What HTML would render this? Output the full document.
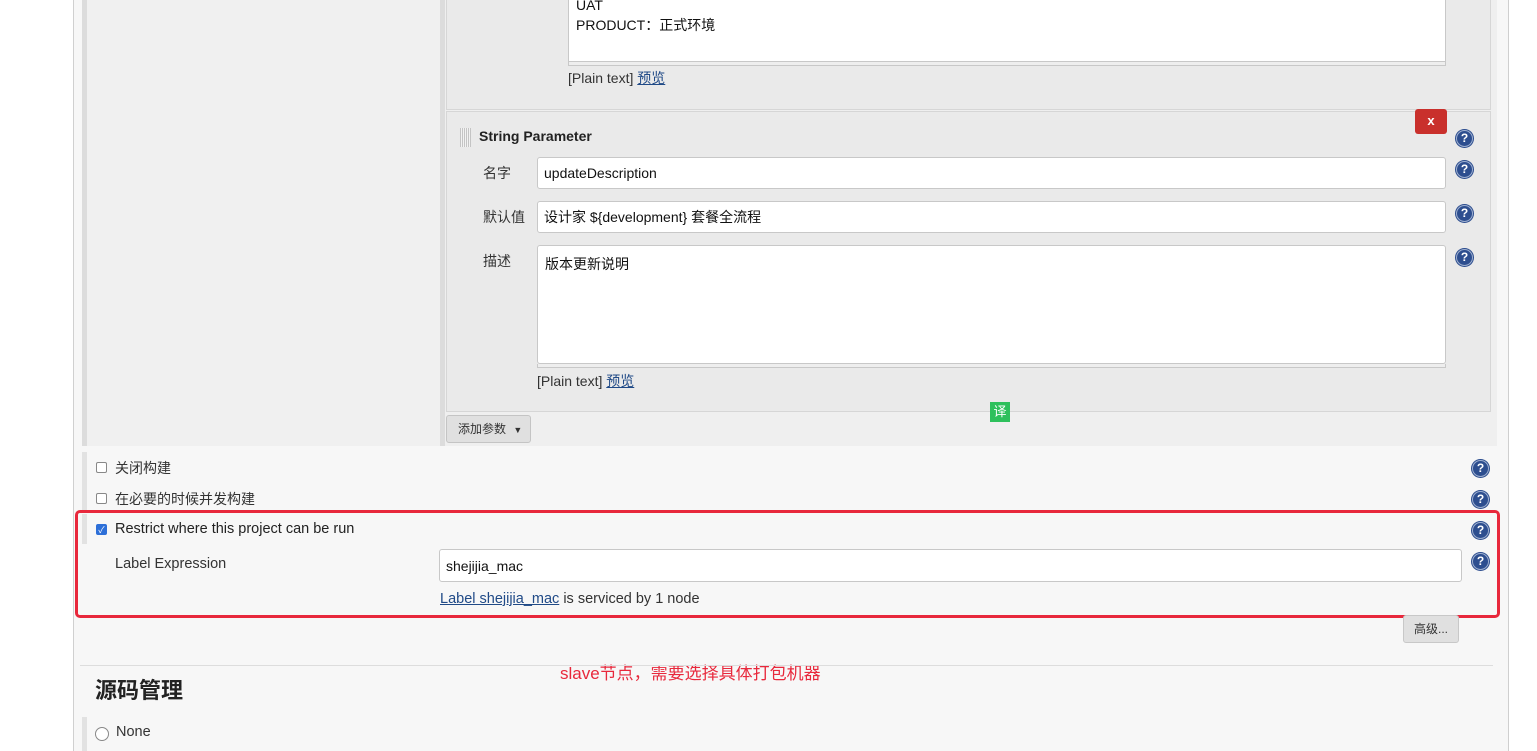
<!DOCTYPE html>
<html><head><meta charset="utf-8"><style>
*{box-sizing:border-box;margin:0;padding:0}
body{width:1537px;height:751px;overflow:hidden;background:#fff;font-family:"Liberation Sans","Noto Sans CJK SC",sans-serif;font-size:14px;color:#333;position:relative}
.a{position:absolute}
.inp{position:absolute;background:#fff;border:1px solid #c8c8c8;border-radius:3px;padding:0 6px;display:flex;align-items:center;font-size:14px;color:#111}
.help{position:absolute;width:17px;height:17px;border-radius:50%;background:#2d4e8f;border:1.5px solid #9fb0d0;box-shadow:0 0 0 1px #2d4e8f;color:#fff;font:bold 12px "Liberation Sans",sans-serif;text-align:center;line-height:14px}
.lbl{position:absolute;font-size:14px;color:#333}
a{color:#204a87;text-decoration:underline}
.cb{position:absolute;width:11px;height:11px;border:1px solid #888;border-radius:2px;background:#fff}
</style></head><body>
<div class="a" style="left:73px;top:0;width:1px;height:751px;background:#d0d0d0"></div>
<div class="a" style="left:74px;top:0;width:1434px;height:751px;background:#f7f7f7"></div>
<div class="a" style="left:1508px;top:0;width:1px;height:751px;background:#cfcfcf"></div>
<div class="a" style="left:82px;top:0;width:1415px;height:446px;background:#efefef"></div>
<div class="a" style="left:82px;top:0;width:5px;height:446px;background:#dcdcdc"></div>
<div class="a" style="left:87px;top:0;width:353px;height:446px;background:#f0f0f0"></div>
<div class="a" style="left:440px;top:0;width:5px;height:446px;background:#dcdcdc"></div>
<div class="a" style="left:446px;top:0;width:1045px;height:110px;background:#eaeaea;border:1px solid #d6d6d6;border-top:none"></div>
<div class="a" style="left:446px;top:111px;width:1045px;height:301px;background:#eaeaea;border:1px solid #d6d6d6"></div>
<div class="a" style="left:568px;top:-8px;width:878px;height:70px;background:#fff;border:1px solid #c8c8c8;padding:2px 7px;font-size:14px;color:#111;line-height:20px">UAT<br>PRODUCT：正式环境</div>
<div class="a" style="left:568px;top:62px;width:878px;height:4px;border:1px solid #c8c8c8;border-top:none;background:#eee"></div>
<div class="lbl" style="left:568px;top:68px">[Plain text] <a>预览</a></div>
<div class="a" style="left:460px;top:128px;width:11px;height:19px;background:repeating-linear-gradient(90deg,#bbb 0 1px,transparent 1px 2px),#f5f5f5;opacity:.8"></div>
<div class="lbl" style="left:479px;top:128px;font-weight:bold;color:#222">String Parameter</div>
<div class="a" style="left:1415px;top:109px;width:32px;height:25px;background:#c9302c;border-radius:3px;color:#fff;font:bold 13px 'Liberation Sans',sans-serif;text-align:center;line-height:24px">x</div>
<div class="help" style="left:1456px;top:130px">?</div>
<div class="lbl" style="left:483px;top:163px">名字</div>
<div class="inp" style="left:537px;top:157px;width:909px;height:32px">updateDescription</div>
<div class="help" style="left:1456px;top:161px">?</div>
<div class="lbl" style="left:483px;top:207px">默认值</div>
<div class="inp" style="left:537px;top:201px;width:909px;height:32px">设计家 ${development} 套餐全流程</div>
<div class="help" style="left:1456px;top:205px">?</div>
<div class="lbl" style="left:483px;top:251px">描述</div>
<div class="a" style="left:537px;top:245px;width:909px;height:119px;background:#fff;border:1px solid #c8c8c8;border-radius:3px;padding:8px 7px;color:#111">版本更新说明</div>
<div class="a" style="left:537px;top:364px;width:909px;height:4px;border:1px solid #c8c8c8;border-top:none;background:#eee"></div>
<div class="help" style="left:1456px;top:249px">?</div>
<div class="lbl" style="left:537px;top:371px">[Plain text] <a>预览</a></div>
<div class="a" style="left:990px;top:402px;width:20px;height:20px;background:#2ec05c;color:#fff;font-size:13px;text-align:center;line-height:20px">译</div>
<div class="a" style="left:446px;top:415px;width:85px;height:28px;background:#e0e0e0;border:1px solid #c4c4c4;border-radius:3px;font-size:12px;line-height:26px;padding-left:11px;color:#333">添加参数 <span style="font-size:9px;margin-left:4px">▼</span></div>
<div class="a" style="left:82px;top:452px;width:5px;height:60px;background:#e2e2e2"></div>
<div class="cb" style="left:96px;top:462px"></div>
<div class="lbl" style="left:115px;top:458px">关闭构建</div>
<div class="help" style="left:1472px;top:460px">?</div>
<div class="cb" style="left:96px;top:493px"></div>
<div class="lbl" style="left:115px;top:489px">在必要的时候并发构建</div>
<div class="help" style="left:1472px;top:491px">?</div>
<div class="a" style="left:82px;top:514px;width:5px;height:30px;background:#e2e2e2"></div>
<div class="cb" style="left:96px;top:524px;background:#2d6fd8;border-color:#2d6fd8;color:#fff;font-size:9px;line-height:10px;text-align:center">✓</div>
<div class="lbl" style="left:115px;top:521px;color:#222;font-size:14.5px">Restrict where this project can be run</div>
<div class="help" style="left:1472px;top:522px">?</div>
<div class="lbl" style="left:115px;top:556px;font-size:14.5px">Label Expression</div>
<div class="inp" style="left:439px;top:549px;width:1023px;height:33px">shejijia_mac</div>
<div class="help" style="left:1472px;top:553px">?</div>
<div class="lbl" style="left:440px;top:591px;font-size:14.5px"><a>Label shejijia_mac</a> is serviced by 1 node</div>
<div class="a" style="left:75px;top:510px;width:1425px;height:108px;border:3px solid #e8283c;border-radius:5px"></div>
<div class="a" style="left:1403px;top:615px;width:56px;height:28px;background:#e0e0e0;border:1px solid #c8c8c8;border-radius:3px;font-size:12px;text-align:center;line-height:26px">高级...</div>
<div class="a" style="left:560px;top:659px;color:#e8283c;font-size:17px">slave节点，需要选择具体打包机器</div>
<div class="a" style="left:80px;top:665px;width:1413px;height:1px;background:#ddd"></div>
<div class="a" style="left:95px;top:673px;font-size:22px;font-weight:bold;color:#222">源码管理</div>
<div class="a" style="left:82px;top:717px;width:5px;height:34px;background:#e2e2e2"></div>
<div class="a" style="left:95px;top:727px;width:14px;height:14px;border:1px solid #888;border-radius:50%;background:#fff"></div>
<div class="lbl" style="left:116px;top:724px;font-size:14.5px">None</div>
</body></html>
